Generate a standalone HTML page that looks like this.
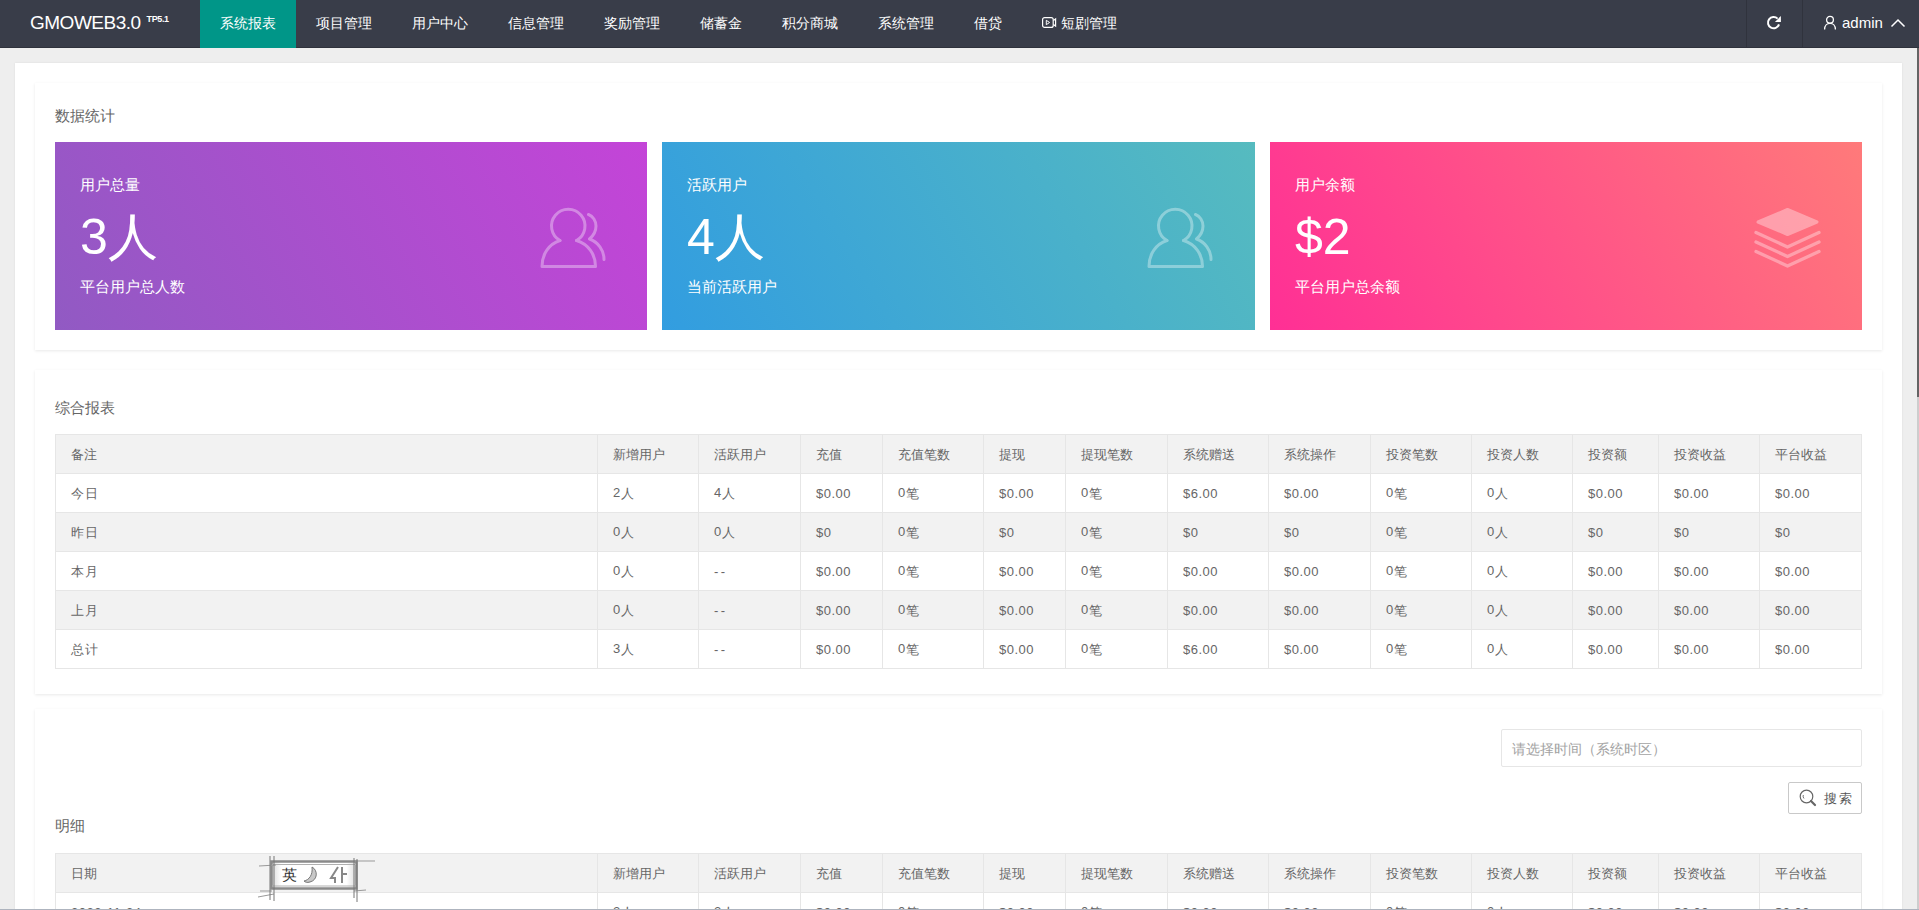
<!DOCTYPE html>
<html>
<head>
<meta charset="utf-8">
<style>
*{box-sizing:border-box;margin:0;padding:0}
html,body{width:1919px;height:910px;overflow:hidden}
body{position:relative;background:#eeeeee;font-family:"Liberation Sans",sans-serif;color:#666;font-size:14px}
.hdr{position:absolute;left:0;top:0;width:1919px;height:48px;background:#393D49;border-bottom:1px solid #2f323c}
.logo{position:absolute;left:30px;top:0;height:47px;line-height:45px;color:#fff;font-size:19px;letter-spacing:-.5px;white-space:nowrap}
.logo sup{font-size:9px;font-weight:bold;position:relative;top:2px;margin-left:6px;vertical-align:9px;line-height:1;letter-spacing:-.4px}
.nav{position:absolute;left:200px;top:0;height:47px;display:flex}
.nav a{display:block;height:47px;line-height:47px;padding:0 20px;color:#fff;font-size:14px;text-decoration:none;white-space:nowrap}
.nav a.on{background:#009688;height:48px}
.sep{position:absolute;top:0;width:1px;height:47px;background:#30333d}
.wrap{position:absolute;left:15px;top:63px;width:1887px;height:900px;background:#fff;box-shadow:0 0 2px rgba(0,0,0,.08)}
.card{position:absolute;left:35px;width:1847px;background:#fff;box-shadow:0 1px 3px rgba(0,0,0,.09)}
.ttl{position:absolute;left:55px;font-size:15px;color:#666;line-height:20px;white-space:nowrap}
.stat{position:absolute;top:142px;height:188px;width:592px;color:#fff}
.stat .l1{position:absolute;left:25px;top:33px;font-size:15px;line-height:20px;white-space:nowrap}
.stat .big{position:absolute;left:25px;top:65px;font-size:50px;line-height:60px;white-space:nowrap}
.stat .l2{position:absolute;left:25px;top:135px;font-size:15px;line-height:20px;white-space:nowrap}
.stat svg{position:absolute}
table{position:absolute;left:55px;border-collapse:collapse;table-layout:fixed;width:1807px;font-size:13px;color:#666}
td,th{border:1px solid #e6e6e6;height:39px;padding:2px 15px 0;text-align:left;font-weight:normal;white-space:nowrap;overflow:hidden}
thead tr{background:#f2f2f2}
td{letter-spacing:.5px}
td b{font-weight:normal;position:relative;top:-1px}

tbody tr:nth-child(even){background:#f2f2f2}
.inp{position:absolute;left:1501px;top:729px;width:361px;height:38px;border:1px solid #e6e6e6;border-radius:2px;padding-left:10px;line-height:38px;color:#a3a3a3;font-size:14px;background:#fff}
.btn{position:absolute;left:1788px;top:782px;width:74px;height:32px;border:1px solid #c9c9c9;border-radius:2px;background:#fff;color:#555;font-size:14px;line-height:30px;white-space:nowrap}
.btn svg{position:absolute;left:10px;top:6px}
.btn span{position:absolute;left:35px;top:1px;font-size:13px;letter-spacing:1.5px}
.sb{position:absolute;left:1917px;top:48px;width:2px;height:862px;background:#cdcdcd}
.sb i{position:absolute;left:0;top:0;width:2px;height:349px;background:#646464}
.btm{position:absolute;left:0;top:909px;width:1919px;height:1px;background:#aeb4be}
</style>
</head>
<body>
<div class="hdr">
  <div class="logo">GMOWEB3.0<sup>TP5.1</sup></div>
  <div class="nav">
    <a class="on">系统报表</a><a>项目管理</a><a>用户中心</a><a>信息管理</a><a>奖励管理</a><a>储蓄金</a><a>积分商城</a><a>系统管理</a><a>借贷</a><a style="position:relative;padding-left:39px"><svg style="position:absolute;left:18.5px;top:16px" width="16" height="13" viewBox="0 0 16 13" fill="none" stroke="#fff" stroke-width="1.2"><rect x="1.6" y="1.6" width="10.6" height="9.8" rx="2"/><path d="M12.4 4.6 L14.6 3 L14.6 10 L12.4 8.4" /><path d="M5.3 4.3 L8.6 6.5 L5.3 8.7 Z" stroke-width="1"/></svg>短剧管理</a>
  </div>
  <div class="sep" style="left:1746px"></div>
  <div class="sep" style="left:1802px"></div>
  <svg style="position:absolute;left:1765px;top:14px" width="18" height="18" viewBox="0 0 18 18" fill="none" stroke="#fff" stroke-width="2"><path d="M12.6 4.6 A5.66 5.66 0 1 0 14.0 10.4"/><path d="M15.9 2 L15.9 7.9 L9.9 7.9 Z" fill="#fff" stroke="none"/></svg>
  <svg style="position:absolute;left:1822px;top:15px" width="16" height="16" viewBox="0 0 16 16" fill="none" stroke="#fff" stroke-width="1.3"><circle cx="8" cy="4.8" r="3.4"/><path d="M2.6 14.4 C2.6 10.6 5 8.4 8 8.4 C11 8.4 13.4 10.6 13.4 14.4"/></svg>
  <div style="position:absolute;left:1842px;top:0;height:47px;line-height:46px;color:#fff;font-size:15px">admin</div>
  <svg style="position:absolute;left:1890px;top:17px" width="16" height="12" viewBox="0 0 16 12" fill="none" stroke="#fff" stroke-width="1.5"><path d="M1.5 9.5 L8 3 L14.5 9.5"/></svg>

</div>
<div class="wrap"></div>
<div class="card" style="top:83px;height:267px"></div>
<div class="card" style="top:370px;height:324px"></div>
<div class="card" style="top:709px;height:400px"></div>
<div class="ttl" style="top:106px">数据统计</div>
<div class="stat" style="left:55px;background:linear-gradient(60deg,#915ac3,#c444d8)">
  <div class="l1">用户总量</div><div class="big">3人</div><div class="l2">平台用户总人数</div>
</div>
<div class="stat" style="left:662px;width:593px;background:linear-gradient(60deg,#329de0,#56bbbf)">
  <div class="l1">活跃用户</div><div class="big">4人</div><div class="l2">当前活跃用户</div>
</div>
<div class="stat" style="left:1270px;background:linear-gradient(60deg,#ff2f95,#ff7a7a)">
  <div class="l1">用户余额</div><div class="big">$2</div><div class="l2">平台用户总余额</div>
</div>
<div class="ttl" style="top:398px">综合报表</div>

<div style="position:absolute;left:530px;top:195px"><svg width="80" height="80" viewBox="0 0 80 80" fill="none" stroke="#fff" stroke-width="3" stroke-linecap="round" stroke-linejoin="round" opacity="0.35"><path d="M30 45.5 A16.75 16.75 0 1 1 46.5 45.5"/><path d="M30 45.5 C19 49 12 59 12 71.5 L65.5 71.5 C65.5 59 58 49 46.5 45.5"/><path d="M58.5 19.5 C63 21 66 26 66 31 C66 37 63 41 59.5 44 C68 47 74 55 74 64.5"/></svg></div>
<div style="position:absolute;left:1137px;top:195px"><svg width="80" height="80" viewBox="0 0 80 80" fill="none" stroke="#fff" stroke-width="3" stroke-linecap="round" stroke-linejoin="round" opacity="0.35"><path d="M30 45.5 A16.75 16.75 0 1 1 46.5 45.5"/><path d="M30 45.5 C19 49 12 59 12 71.5 L65.5 71.5 C65.5 59 58 49 46.5 45.5"/><path d="M58.5 19.5 C63 21 66 26 66 31 C66 37 63 41 59.5 44 C68 47 74 55 74 64.5"/></svg></div>
<div style="position:absolute;left:1745px;top:195px"><svg width="85" height="85" viewBox="0 0 85 85" fill="none" stroke="#fff" stroke-width="3.3" stroke-linecap="round" stroke-linejoin="round" opacity="0.35"><path d="M13 27 L42.5 14.5 L72 27 L42.5 39.5 Z" fill="#fff" stroke-width="3"/><path d="M11 37.5 L42.5 52 L74 37.5"/><path d="M11 47 L42.5 61.5 L74 47"/><path d="M11 56.5 L42.5 71 L74 56.5"/></svg></div>
<table style="top:434px"><colgroup><col style="width:542px"><col style="width:101px"><col style="width:102px"><col style="width:82px"><col style="width:101px"><col style="width:82px"><col style="width:102px"><col style="width:101px"><col style="width:102px"><col style="width:101px"><col style="width:101px"><col style="width:86px"><col style="width:101px"><col style="width:102px"></colgroup><thead><tr><th>备注</th><th>新增用户</th><th>活跃用户</th><th>充值</th><th>充值笔数</th><th>提现</th><th>提现笔数</th><th>系统赠送</th><th>系统操作</th><th>投资笔数</th><th>投资人数</th><th>投资额</th><th>投资收益</th><th>平台收益</th></tr></thead><tbody><tr><td>今日</td><td><b>2</b>人</td><td><b>4</b>人</td><td><b>$0.00</b></td><td><b>0</b>笔</td><td><b>$0.00</b></td><td><b>0</b>笔</td><td><b>$6.00</b></td><td><b>$0.00</b></td><td><b>0</b>笔</td><td><b>0</b>人</td><td><b>$0.00</b></td><td><b>$0.00</b></td><td><b>$0.00</b></td></tr><tr><td>昨日</td><td><b>0</b>人</td><td><b>0</b>人</td><td><b>$0</b></td><td><b>0</b>笔</td><td><b>$0</b></td><td><b>0</b>笔</td><td><b>$0</b></td><td><b>$0</b></td><td><b>0</b>笔</td><td><b>0</b>人</td><td><b>$0</b></td><td><b>$0</b></td><td><b>$0</b></td></tr><tr><td>本月</td><td><b>0</b>人</td><td><b style="letter-spacing:2.5px">--</b></td><td><b>$0.00</b></td><td><b>0</b>笔</td><td><b>$0.00</b></td><td><b>0</b>笔</td><td><b>$0.00</b></td><td><b>$0.00</b></td><td><b>0</b>笔</td><td><b>0</b>人</td><td><b>$0.00</b></td><td><b>$0.00</b></td><td><b>$0.00</b></td></tr><tr><td>上月</td><td><b>0</b>人</td><td><b style="letter-spacing:2.5px">--</b></td><td><b>$0.00</b></td><td><b>0</b>笔</td><td><b>$0.00</b></td><td><b>0</b>笔</td><td><b>$0.00</b></td><td><b>$0.00</b></td><td><b>0</b>笔</td><td><b>0</b>人</td><td><b>$0.00</b></td><td><b>$0.00</b></td><td><b>$0.00</b></td></tr><tr><td>总计</td><td><b>3</b>人</td><td><b style="letter-spacing:2.5px">--</b></td><td><b>$0.00</b></td><td><b>0</b>笔</td><td><b>$0.00</b></td><td><b>0</b>笔</td><td><b>$6.00</b></td><td><b>$0.00</b></td><td><b>0</b>笔</td><td><b>0</b>人</td><td><b>$0.00</b></td><td><b>$0.00</b></td><td><b>$0.00</b></td></tr></tbody></table>
<div class="card3">
<div class="inp">请选择时间（系统时区）</div>
<div class="btn"><svg width="18" height="18" viewBox="0 0 18 18" fill="none" stroke="#666" stroke-width="1.2"><circle cx="7.5" cy="7.5" r="6.3"/><path d="M12 12 L16 16" stroke-width="2.2" stroke-linecap="round"/><path d="M4.3 6 A3.5 3.5 0 0 0 5 9.5" stroke-width="0.9"/></svg><span>搜索</span></div>
</div>
<div class="ttl" style="top:816px">明细</div>
<table style="top:853px"><colgroup><col style="width:542px"><col style="width:101px"><col style="width:102px"><col style="width:82px"><col style="width:101px"><col style="width:82px"><col style="width:102px"><col style="width:101px"><col style="width:102px"><col style="width:101px"><col style="width:101px"><col style="width:86px"><col style="width:101px"><col style="width:102px"></colgroup><thead><tr><th>日期</th><th>新增用户</th><th>活跃用户</th><th>充值</th><th>充值笔数</th><th>提现</th><th>提现笔数</th><th>系统赠送</th><th>系统操作</th><th>投资笔数</th><th>投资人数</th><th>投资额</th><th>投资收益</th><th>平台收益</th></tr></thead><tbody><tr class="r0"><td><b>2023-11-24</b></td><td><b>2</b>人</td><td><b>2</b>人</td><td><b>$0.00</b></td><td><b>0</b>笔</td><td><b>$0.00</b></td><td><b>0</b>笔</td><td><b>$0.00</b></td><td><b>$0.00</b></td><td><b>0</b>笔</td><td><b>0</b>人</td><td><b>$0.00</b></td><td><b>$0.00</b></td><td><b>$0.00</b></td></tr></tbody></table>
<svg style="position:absolute;left:258px;top:854px" width="120" height="48" viewBox="0 0 120 48">
<defs><linearGradient id="ig" x1="0" x2="1"><stop offset="0" stop-color="#d8d8d8"/><stop offset=".12" stop-color="#fff"/><stop offset=".88" stop-color="#fff"/><stop offset="1" stop-color="#d8d8d8"/></linearGradient></defs>
<rect x="13" y="8" width="86" height="26" fill="url(#ig)"/>
<rect x="13.5" y="7.5" width="85" height="27" fill="none" stroke="#8a8a8a" stroke-width="2.5"/><path d="M14 10.5 L98 10.5 M14 32 L98 32" stroke="#b0b0b0" stroke-width="1"/>
<path d="M1 12 L18 11 M0 43 L16 40 M2 37 L14 37 M96 7 L117 7 M96 37 L108 36" stroke="#999" stroke-width="1" fill="none"/>
<path d="M12 2 L12 46 M16 2 L16 47 M96 4 L96 44 M99 5 L99 52" stroke="#777" stroke-width="1" fill="none"/>
<text x="24" y="26" font-size="15" fill="#333" font-family="Liberation Sans, sans-serif">英</text>
<path d="M54 13 C60 16 60 26 52 28 C49 29 47 28 46 27 C51 26 55 21 54 13 Z" fill="#c8c8c8" stroke="#777" stroke-width="1"/>
<path d="M80 13 L73 24 L77 24 L77 29 M84 13 L84 29 M84 20 L89 20" stroke="#888" stroke-width="2" fill="none"/>
</svg>
<div class="sb"><i></i></div>
<div class="btm"></div>
</body>
</html>
